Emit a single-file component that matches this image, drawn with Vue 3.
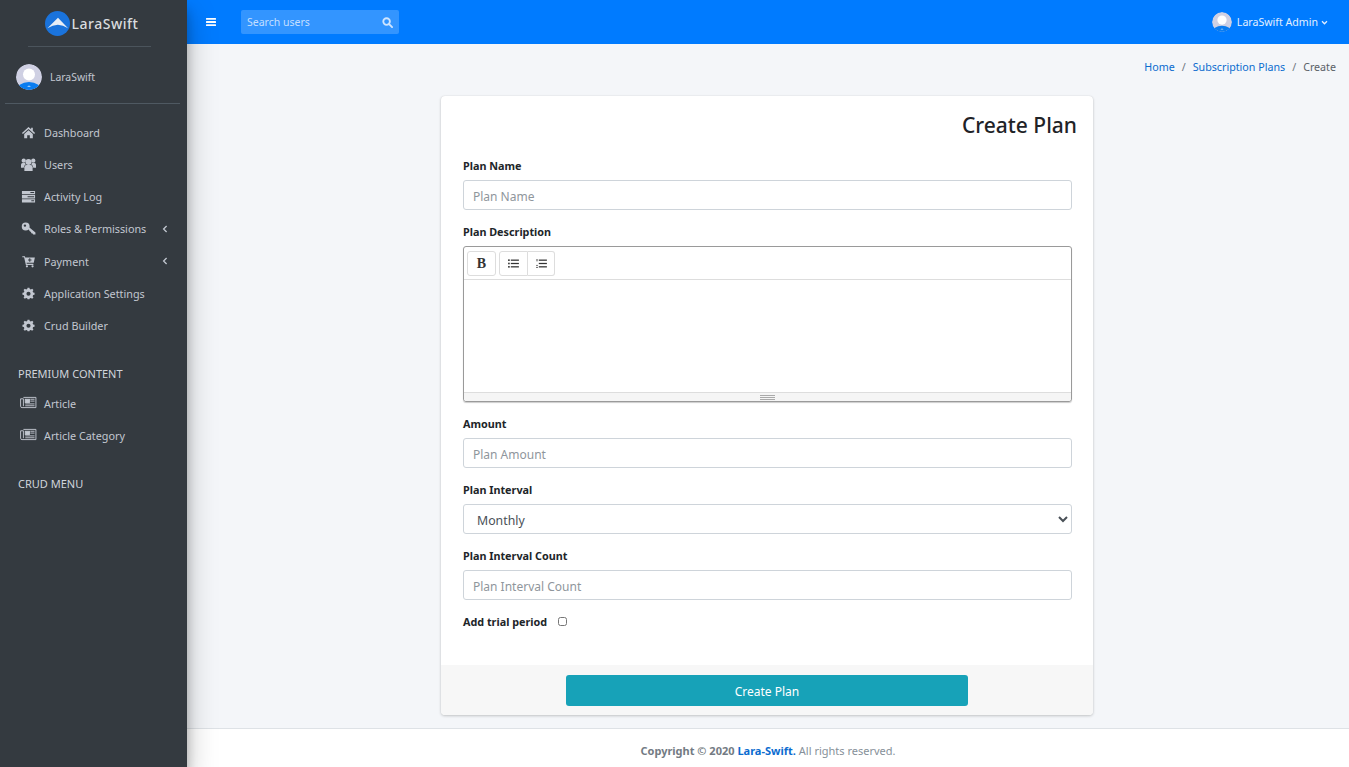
<script setup>
import { ref } from 'vue';

const mainMenu = ref([
  { label: 'Dashboard', icon: 'home' },
  { label: 'Users', icon: 'users' },
  { label: 'Activity Log', icon: 'server' },
  { label: 'Roles & Permissions', icon: 'key', arrow: true },
  { label: 'Payment', icon: 'cart', arrow: true },
  { label: 'Application Settings', icon: 'cog' },
  { label: 'Crud Builder', icon: 'cog' },
]);

const premiumMenu = ref([
  { label: 'Article', icon: 'news' },
  { label: 'Article Category', icon: 'news' },
]);

const trial = ref(false);
</script>

<template>
  <div class="layout">
    <aside class="sidebar">
      <div class="brand">
        <svg class="brand_logo" viewBox="0 0 26 26">
          <circle cx="13" cy="13" r="13" fill="#1a73dc" />
          <path d="M2.5 18 L13.5 7 L24 18 Q13.5 10.5 2.5 18 Z" fill="#e8eef6" />
        </svg>
        <span class="brand_text">LaraSwift</span>
      </div>

      <div class="user_panel">
        <svg class="avatar" viewBox="0 0 26 26">
          <defs><clipPath id="side-av"><circle cx="13" cy="13" r="13" /></clipPath></defs>
          <g clip-path="url(#side-av)">
            <rect width="26" height="26" fill="#cfd0e3" />
            <circle cx="13" cy="10.5" r="6" fill="#fff" />
            <ellipse cx="13" cy="27" rx="13" ry="9" fill="#0a7cf0" />
            <path d="M11 23 L13 21.4 L15 23 L13 22.4 Z" fill="#fff" />
          </g>
        </svg>
        <span>LaraSwift</span>
      </div>

      <nav class="menu">
        <a v-for="item in mainMenu" :key="item.label" class="menu_item">
          <svg class="menu_icon" viewBox="0 0 16 16" fill="currentColor">
            <template v-if="item.icon === 'home'">
              <path d="M8 2 L1 8.4 L2 9.5 L8 4.2 L14 9.5 L15 8.4 L12.6 6.2 V2.8 H10.8 V4.6 Z" />
              <path d="M3.4 9.6 L8 5.5 L12.6 9.6 V14 H9.4 V10.8 H6.6 V14 H3.4 Z" />
            </template>
            <template v-else-if="item.icon === 'users'">
              <circle cx="8" cy="5.2" r="3.2" />
              <circle cx="2.9" cy="3.9" r="2.3" />
              <circle cx="13.1" cy="3.9" r="2.3" />
              <path d="M3.6 15 V11 Q3.6 8.6 6 8.6 H10 Q12.4 8.6 12.4 11 V15 Z" />
              <path d="M0 11.4 V8.2 Q0 6.5 1.7 6.5 H4.4 Q4.6 7.4 5 7.9 Q3 8.6 2.9 11.4 Z" />
              <path d="M16 11.4 V8.2 Q16 6.5 14.3 6.5 H11.6 Q11.4 7.4 11 7.9 Q13 8.6 13.1 11.4 Z" />
            </template>
            <template v-else-if="item.icon === 'server'">
              <path fill-rule="evenodd" d="M1 2 H15 V5.6 H1 Z M10 3.3 V4.3 H14 V3.3 Z" />
              <path fill-rule="evenodd" d="M1 6.4 H15 V10 H1 Z M7 7.7 V8.7 H14 V7.7 Z" />
              <path fill-rule="evenodd" d="M1 10.8 H15 V14.4 H1 Z M11 12.1 V13.1 H14 V12.1 Z" />
            </template>
            <template v-else-if="item.icon === 'key'">
              <path fill-rule="evenodd" d="M5 1.6 A4.2 4.2 0 1 1 5 10 A4.2 4.2 0 1 1 5 1.6 Z M4.2 3.6 A1.3 1.3 0 1 0 4.2 6.2 A1.3 1.3 0 1 0 4.2 3.6 Z" />
              <path d="M7.6 8.2 L9 6.8 L15.4 12.2 V14.4 H13 L12 13 L10.8 13 V11.6 L9.6 11.2 Z" />
            </template>
            <template v-else-if="item.icon === 'cart'">
              <path fill-rule="evenodd" d="M1.4 2.4 H4.2 L4.5 3.6 H14.8 L13.6 9.4 H5.9 L6.2 10.5 H13.2 V11.6 H5.2 L3.3 3.5 H1.4 Z M8.8 4.6 V5.9 H7.5 V7 H8.8 V8.3 H9.9 V7 H11.2 V5.9 H9.9 V4.6 Z" />
              <circle cx="6.3" cy="13.1" r="1.2" />
              <circle cx="12.3" cy="13.1" r="1.2" />
            </template>
            <template v-else>
              <path fill-rule="evenodd" d="M6.8 1.4 H9.2 L9.6 3.2 L11 3.8 L12.6 2.8 L14.2 4.4 L13.2 6 L13.8 7.4 L15.6 7.8 V10.2 L13.8 10.6 L13.2 12 L14.2 13.6 L12.6 15.2 L11 14.2 L9.6 14.8 L9.2 16 H6.8 L6.4 14.8 L5 14.2 L3.4 15.2 L1.8 13.6 L2.8 12 L2.2 10.6 L.4 10.2 V7.8 L2.2 7.4 L2.8 6 L1.8 4.4 L3.4 2.8 L5 3.8 L6.4 3.2 Z M8 6.4 A2.6 2.6 0 1 0 8 11.6 A2.6 2.6 0 1 0 8 6.4 Z" transform="translate(1.2 .6) scale(.85)" />
            </template>
          </svg>
          <span class="menu_label">{{ item.label }}</span>
          <svg v-if="item.arrow" class="menu_arrow" viewBox="0 0 6 8">
            <path d="M4.6 1 L1.6 4 L4.6 7" fill="none" stroke="currentColor" stroke-width="1.3" />
          </svg>
        </a>
      </nav>

      <div class="menu_header premium">PREMIUM CONTENT</div>
      <nav class="menu">
        <a v-for="item in premiumMenu" :key="item.label" class="menu_item">
          <svg class="menu_icon news" viewBox="0 0 18 14" fill="none" stroke="currentColor">
            <path d="M3.5 1.5 H17 V12.5 H2 Q.5 12.5 .5 11 V3 H3.5 V11" />
            <rect x="5.5" y="3.5" width="4.5" height="3.5" fill="currentColor" />
            <path d="M11 3.5 H15.5 M11 5.5 H15.5 M5.5 8.5 H15.5 M5.5 10.5 H15.5" />
          </svg>
          <span class="menu_label">{{ item.label }}</span>
        </a>
      </nav>

      <div class="menu_header crud">CRUD MENU</div>
    </aside>

    <div class="page">
      <header class="topbar">
        <svg class="hamburger" viewBox="0 0 10 8" fill="#fff">
          <rect width="10" height="1.8" rx=".5" />
          <rect y="3.1" width="10" height="1.8" rx=".5" />
          <rect y="6.2" width="10" height="1.8" rx=".5" />
        </svg>
        <div class="search">
          <span>Search users</span>
          <svg class="search_icon" viewBox="0 0 12 12" fill="none" stroke="#cfe5ff" stroke-width="2">
            <circle cx="5" cy="5" r="3.6" />
            <path d="M7.8 7.8 L11 11" stroke-linecap="round" />
          </svg>
        </div>
        <div class="top_user">
          <svg class="top_avatar" viewBox="0 0 26 26">
            <defs><clipPath id="top-av"><circle cx="13" cy="13" r="13" /></clipPath></defs>
            <g clip-path="url(#top-av)">
              <rect width="26" height="26" fill="#cfd0e3" />
              <circle cx="13" cy="10.5" r="6" fill="#fff" />
              <ellipse cx="13" cy="27" rx="13" ry="9" fill="#0a7cf0" />
              <path d="M11 23 L13 21.4 L15 23 L13 22.4 Z" fill="#fff" />
            </g>
          </svg>
          <span>LaraSwift Admin</span>
          <svg class="top_chevron" viewBox="0 0 8 6">
            <path d="M1 1.5 L4 4.5 L7 1.5" fill="none" stroke="#e4f0ff" stroke-width="1.5" />
          </svg>
        </div>
      </header>

      <main class="content">
        <div class="breadcrumb">
          <a>Home</a><i>/</i><a>Subscription Plans</a><i>/</i><span>Create</span>
        </div>

        <form class="card" @submit.prevent>
          <div class="card_body">
            <h3 class="card_title">Create Plan</h3>

            <div class="field">
              <label>Plan Name</label>
              <input type="text" placeholder="Plan Name" />
            </div>

            <div class="field">
              <label>Plan Description</label>
              <div class="editor">
                <div class="toolbar">
                  <button type="button" class="tool bold">B</button>
                  <div class="tool_group">
                    <button type="button" class="tool">
                      <svg viewBox="0 0 12 10" fill="#333">
                        <rect x="0" y="0.4" width="1.8" height="1.8" />
                        <rect x="0" y="4.1" width="1.8" height="1.8" />
                        <rect x="0" y="7.8" width="1.8" height="1.8" />
                        <rect x="3" y="0.6" width="9" height="1.4" />
                        <rect x="3" y="4.3" width="9" height="1.4" />
                        <rect x="3" y="8" width="9" height="1.4" />
                      </svg>
                    </button>
                    <button type="button" class="tool">
                      <svg viewBox="0 0 12 10" fill="#333">
                        <rect x="0.5" y="0" width="1" height="2.6" />
                        <rect x="0" y="6.6" width="2" height="0.8" />
                        <rect x="0" y="8.8" width="2" height="0.9" />
                        <rect x="3" y="0.6" width="9" height="1.4" />
                        <rect x="3" y="4.3" width="9" height="1.4" />
                        <rect x="3" y="8" width="9" height="1.4" />
                      </svg>
                    </button>
                  </div>
                </div>
                <div class="editor_body"></div>
                <div class="statusbar"><span class="grip"></span></div>
              </div>
            </div>

            <div class="field">
              <label>Amount</label>
              <input type="text" placeholder="Plan Amount" />
            </div>

            <div class="field">
              <label>Plan Interval</label>
              <select>
                <option>Monthly</option>
                <option>Yearly</option>
              </select>
            </div>

            <div class="field">
              <label>Plan Interval Count</label>
              <input type="text" placeholder="Plan Interval Count" />
            </div>

            <div class="trial">
              <label>Add trial period</label>
              <input v-model="trial" type="checkbox" />
            </div>
          </div>

          <div class="card_footer">
            <button type="submit" class="submit">Create Plan</button>
          </div>
        </form>
      </main>

      <footer class="footer">
        <strong>Copyright © 2020 <a>Lara-Swift.</a></strong> All rights reserved.
      </footer>
    </div>
  </div>
</template>

<style>
html, body { margin: 0; height: 100%; overflow: hidden; }
</style>

<style scoped>
.layout {
  display: flex;
  height: 100vh;
  font-family: "Noto Sans", "Open Sans", sans-serif;
  font-size: 10.8px;
  color: #212529;
}

.sidebar {
  width: 187px;
  flex-shrink: 0;
  background: #343a40;
  color: #c2c7d0;
  box-shadow: 0 14px 28px rgba(0,0,0,0.25), 0 10px 10px rgba(0,0,0,0.22);
  position: relative;
  z-index: 2;
}

.brand {
  display: flex;
  align-items: center;
  justify-content: center;
  gap: 2px;
  height: 46px;
  margin: 0 36px 0 28px;
  padding-left: 2px;
  border-bottom: 1px solid #4b545c;
  box-sizing: content-box;
}
.brand_logo { width: 25px; height: 25px; margin-left: 2px; margin-top: 1px; }
.brand_text {
  font-size: 14px;
  font-weight: 500;
  color: #d9dcdf;
  letter-spacing: 0.5px;
}

.user_panel {
  display: flex;
  align-items: center;
  gap: 8px;
  height: 53px;
  margin: 0 7px 0 5px;
  padding: 3px 0 0 11px;
  border-bottom: 1px solid #4f5962;
  box-sizing: content-box;
  font-size: 10.4px;
}
.avatar { width: 26px; height: 26px; border-radius: 50%; }

.menu { display: flex; flex-direction: column; }
.menu_item {
  display: flex;
  align-items: center;
  height: 32.2px;
  padding-left: 21px;
}
.user_panel + .menu { margin-top: 12.2px; }
.menu_icon { width: 15px; height: 15px; flex-shrink: 0; margin-right: 8px; }
.menu_icon.news { width: 17px; height: 13px; margin: -2px 7px 0 -1px; }
.menu_label { flex: 1; }
.menu_arrow { width: 6px; height: 8px; margin-right: 19px; }

.menu_header { padding-left: 18px; font-size: 11px; color: #d0d4db; line-height: 16px; }
.menu_header.premium { margin-top: 24px; margin-bottom: 6px; }
.menu_header.crud { margin-top: 24px; }

.page {
  flex: 1;
  min-width: 0;
  display: flex;
  flex-direction: column;
}

.topbar {
  height: 44px;
  flex-shrink: 0;
  display: flex;
  align-items: center;
  background: #007bff;
  color: #e4f0ff;
  padding: 0 21px 0 19px;
}
.hamburger { width: 10px; height: 8px; margin-right: 25px; }
.search {
  width: 158px;
  height: 24px;
  box-sizing: border-box;
  display: flex;
  align-items: center;
  justify-content: space-between;
  padding: 0 6px;
  background: #3395ff;
  border-radius: 2px;
  color: #c4dfff;
  font-size: 10.5px;
}
.search_icon { width: 11px; height: 11px; }
.top_user {
  margin-left: auto;
  display: flex;
  align-items: center;
  gap: 5px;
  font-size: 10.6px;
}
.top_avatar { width: 20px; height: 20px; border-radius: 50%; }
.top_chevron { width: 7px; height: 5px; margin-left: -2px; }

.content {
  flex: 1;
  min-height: 0;
  background: #f4f6f9;
  display: flex;
  flex-direction: column;
  align-items: center;
  padding: 0 2px 13px 0;
}
.breadcrumb {
  align-self: flex-end;
  display: flex;
  align-items: center;
  height: 52px;
  padding: 0 11px 6px 0;
  box-sizing: border-box;
  font-size: 10.7px;
  color: #5a6168;
}
.breadcrumb a { color: #0b6ccf; }
.breadcrumb i { font-style: normal; margin: 0 7px; color: #6c757d; }

.card {
  width: 652px;
  flex: 1;
  display: flex;
  flex-direction: column;
  background: #fff;
  border-radius: 4px;
  box-shadow: 0 0 1px rgba(0,0,0,0.125), 0 1px 3px rgba(0,0,0,0.2);
}
.card_body { flex: 1; padding: 0 21px 0 22px; }
.card_title {
  margin: 0 -5px 0 0;
  padding: 14px 0 3px;
  text-align: right;
  font-size: 21px;
  font-weight: 500;
  line-height: 31px;
  color: #1f2327;
}

.field { display: flex; flex-direction: column; margin-top: 14px; }
.field label, .trial label {
  font-weight: 700;
  font-size: 10.8px;
  line-height: 15px;
  color: #212529;
}
.field label { margin-bottom: 7px; }
.field input, .field select {
  height: 30px;
  box-sizing: border-box;
  border: 1px solid #ced4da;
  border-radius: 3px;
  padding: 2px 9px 0;
  background: #fff;
  font: 12px "Noto Sans", "Open Sans", sans-serif;
  color: #495057;
  outline: none;
}
.field select { font-size: 12.3px; }
.field input::placeholder { color: #8f969c; }

.editor {
  height: 156px;
  box-sizing: border-box;
  border: 1px solid #9a9a9a;
  border-radius: 3px;
  display: flex;
  flex-direction: column;
  box-shadow: 0 1px 1px rgba(0,0,0,0.2);
}
.toolbar {
  display: flex;
  gap: 3px;
  padding: 4px 3px 3px;
  height: 33px;
  box-sizing: border-box;
  border-bottom: 1px solid #ddd;
}
.tool {
  width: 29px;
  height: 25px;
  padding: 0;
  background: #fff;
  border: 1px solid #ddd;
  border-radius: 3px;
  display: flex;
  align-items: center;
  justify-content: center;
}
.tool svg { width: 11px; height: 9px; }
.bold { font: 700 14px "Liberation Serif", serif; color: #333; }
.tool_group { display: flex; }
.tool_group .tool:first-child { border-radius: 3px 0 0 3px; }
.tool_group .tool:last-child { border-radius: 0 3px 3px 0; border-left: 0; width: 27px; }
.editor_body { flex: 1; }
.statusbar {
  height: 8px;
  background: #f5f5f5;
  border-top: 1px solid #ddd;
  border-radius: 0 0 3px 3px;
  display: flex;
  justify-content: center;
  align-items: center;
}
.grip {
  width: 15px;
  height: 5px;
  box-sizing: border-box;
  border-top: 1px solid #aaa;
  border-bottom: 1px solid #aaa;
  background: linear-gradient(#aaa, #aaa) center / 100% 1px no-repeat;
}

.trial {
  display: flex;
  align-items: center;
  gap: 11px;
  margin-top: 14px;
}
.trial input { width: 9px; height: 9px; margin: 0; }

.card_footer {
  height: 50px;
  box-sizing: border-box;
  background: #f7f7f7;
  border-radius: 0 0 4px 4px;
  display: flex;
  justify-content: center;
  padding-top: 10px;
}
.submit {
  width: 402px;
  height: 31px;
  padding: 1px 0 0;
  border: 0;
  border-radius: 3px;
  background: #17a2b8;
  color: #fff;
  font: 12px "Noto Sans", "Open Sans", sans-serif;
}

.footer {
  height: 39px;
  flex-shrink: 0;
  box-sizing: border-box;
  background: #fff;
  border-top: 1px solid #dee2e6;
  display: flex;
  align-items: center;
  justify-content: center;
  gap: 3px;
  padding-top: 4px;
  font-size: 11px;
  color: #869099;
}
.footer strong { color: #737b83; font-weight: 700; }
.footer a { color: #0b6ccf; }
</style>
